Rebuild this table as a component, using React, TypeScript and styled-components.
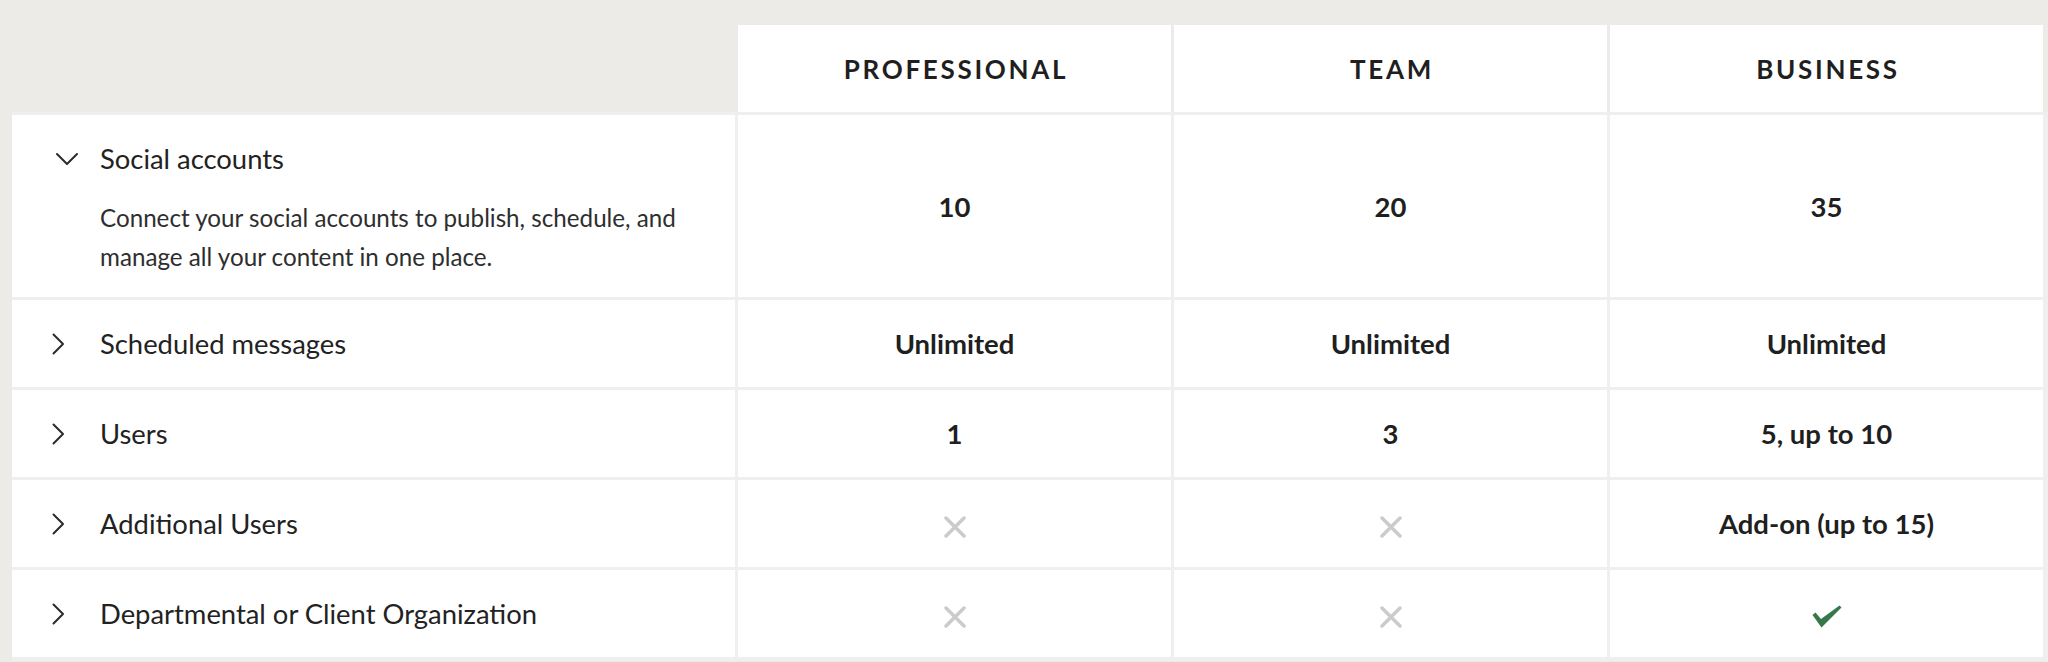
import React from 'react';
import styled, { createGlobalStyle } from 'styled-components';

type Cell = string | boolean;

interface Feature {
  label: string;
  description?: string;
  open?: boolean;
  values: Cell[];
}

const plans = ['Professional', 'Team', 'Business'];

const features: Feature[] = [
  {
    label: 'Social accounts',
    description:
      'Connect your social accounts to publish, schedule, and manage all your content in one place.',
    open: true,
    values: ['10', '20', '35'],
  },
  { label: 'Scheduled messages', values: ['Unlimited', 'Unlimited', 'Unlimited'] },
  { label: 'Users', values: ['1', '3', '5, up to 10'] },
  { label: 'Additional Users', values: [false, false, 'Add-on (up to 15)'] },
  { label: 'Departmental or Client Organization', values: [false, false, true] },
];

const Chevron: React.FC<{ open?: boolean }> = ({ open }) => (
  <svg width="30" height="22" viewBox="0 0 30 22" fill="none">
    <polyline
      points={open ? '7,6 17,16 27,6' : '3.5,1.5 13,11 3.5,20.5'}
      stroke="#2b2b2b"
      strokeWidth="2"
      strokeLinecap="round"
      strokeLinejoin="round"
    />
  </svg>
);

const Cross = () => (
  <Mark width="22" height="22" viewBox="0 0 22 22">
    <path d="M2 2 L20 20 M20 2 L2 20" stroke="#cbcbcb" strokeWidth="3.5" strokeLinecap="round" />
  </Mark>
);

const Check = () => (
  <Mark width="30" height="23" viewBox="0 0 30 23">
    <path d="M0.5 10 L3.5 7.5 L9 14 L27.5 0.5 L29.5 2.5 L9.5 22.5 Z" fill="#37784a" />
  </Mark>
);

const renderValue = (v: Cell) => {
  if (v === true) return <Check />;
  if (v === false) return <Cross />;
  return v;
};

const App: React.FC = () => (
  <>
    <GlobalStyle />
    <Page>
      <HeaderRow>
        <Corner />
        {plans.map((p) => (
          <PlanHeader key={p}>{p}</PlanHeader>
        ))}
      </HeaderRow>
      <Body>
        {features.map((f) => (
          <React.Fragment key={f.label}>
            <FeatureCell $open={f.open}>
              <LabelLine>
                <IconSlot>
                  <Chevron open={f.open} />
                </IconSlot>
                {f.label}
              </LabelLine>
              {f.open && f.description && <Description>{f.description}</Description>}
            </FeatureCell>
            {f.values.map((v, i) => (
              <ValueCell key={i}>{renderValue(v)}</ValueCell>
            ))}
          </React.Fragment>
        ))}
      </Body>
    </Page>
  </>
);

// Styles
const columns = '723px repeat(3, 433px)';

const GlobalStyle = createGlobalStyle`
  body {
    margin: 0;
    background: #ecebe7;
    font-family: Lato, "Noto Sans", sans-serif;
    color: #222;
  }
`;

const Page = styled.div`
  padding: 25px 0 0 12px;
`;

const HeaderRow = styled.div`
  display: grid;
  grid-template-columns: ${columns};
  column-gap: 3px;
`;

const Corner = styled.div``;

const PlanHeader = styled.div`
  height: 87px;
  box-sizing: border-box;
  padding: 1px 0 0 3px;
  background: #fff;
  display: flex;
  align-items: center;
  justify-content: center;
  font-size: 26px;
  font-weight: 700;
  letter-spacing: 2.7px;
  text-transform: uppercase;
  color: #1f1f1f;
`;

const Body = styled.div`
  display: grid;
  grid-template-columns: ${columns};
  gap: 3px;
  width: max-content;
  padding: 3px 5px 4px 0;
  background: #efefef;
`;

const FeatureCell = styled.div<{ $open?: boolean }>`
  min-height: 87px;
  box-sizing: border-box;
  padding: ${(p) => (p.$open ? '26px 0 21px' : '0')};
  background: #fff;
  display: flex;
  flex-direction: column;
  justify-content: center;
`;

const LabelLine = styled.div`
  display: flex;
  align-items: center;
  gap: 20px;
  padding-left: 38px;
  font-size: 27.4px;
  line-height: 36px;
  color: #222;
`;

const IconSlot = styled.span`
  display: flex;
  width: 30px;
  height: 22px;
`;

const Description = styled.p`
  margin: 21px 0 0 88px;
  max-width: 620px;
  font-size: 24.2px;
  line-height: 39px;
  color: #2e2e2e;
`;

const ValueCell = styled.div`
  background: #fff;
  display: flex;
  align-items: center;
  justify-content: center;
  font-size: 27.5px;
  font-weight: 700;
  color: #1f1f1f;
`;

const Mark = styled.svg`
  display: block;
  margin-top: 6px;
`;

export default App;
